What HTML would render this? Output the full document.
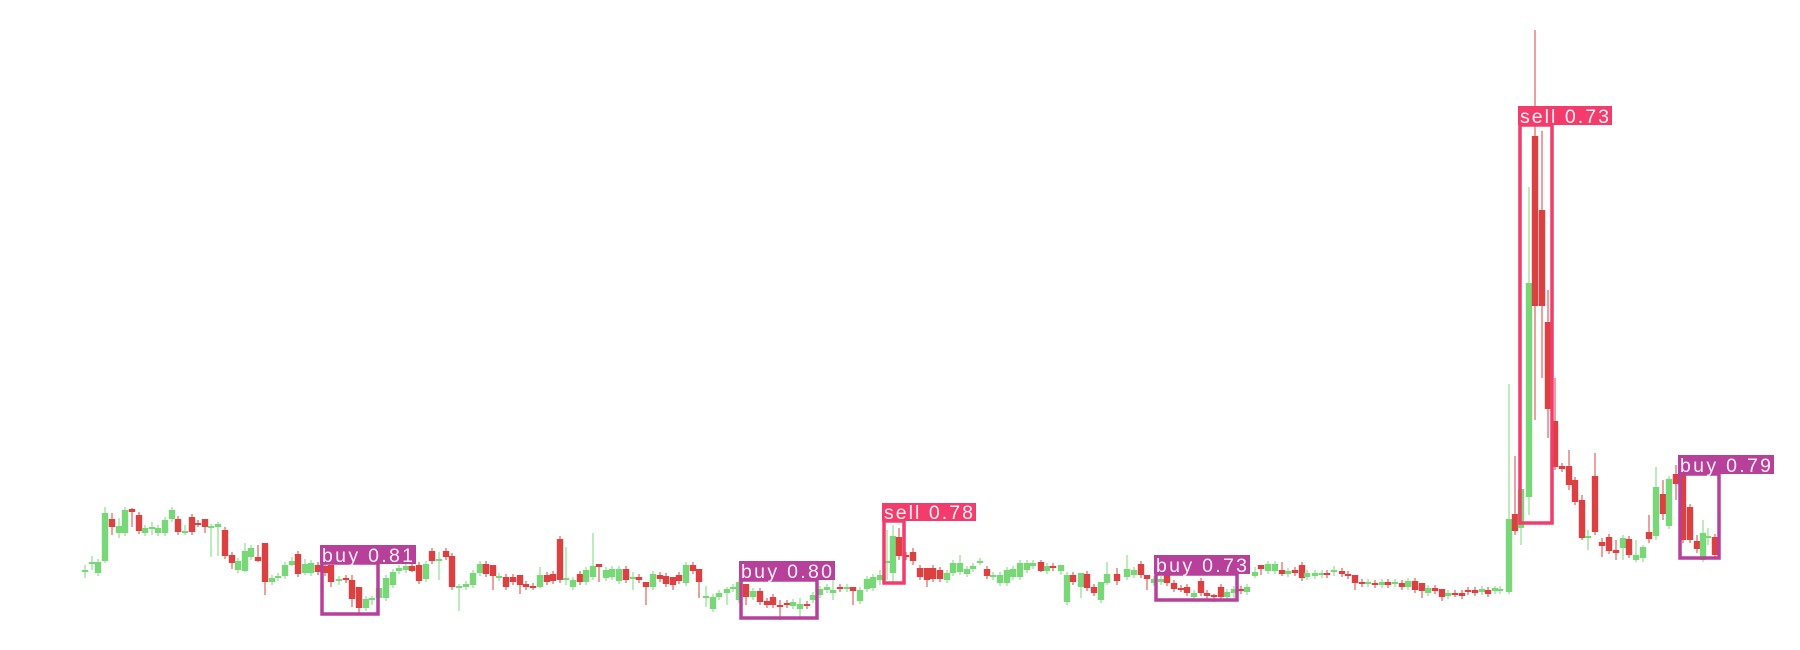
<!DOCTYPE html>
<html><head><meta charset="utf-8">
<style>
html,body{margin:0;padding:0;background:#fff;width:1800px;height:650px;overflow:hidden}
svg{display:block}
.lb{font-family:"Liberation Sans",sans-serif;font-size:19.5px;fill:#fdf0f4}
</style></head>
<body>
<svg id="c" width="1800" height="650" viewBox="0 0 1800 650" xmlns="http://www.w3.org/2000/svg">
<g id="cd"></g>
<g fill="none" stroke-width="3.5">
<rect x="322" y="563" width="56" height="51" stroke="#b7409b"/>
<rect x="741" y="580" width="76" height="38" stroke="#b7409b"/>
<rect x="884" y="521" width="20" height="62" stroke="#f43c6c"/>
<rect x="1156" y="574" width="81" height="26" stroke="#b7409b"/>
<rect x="1520" y="125" width="32" height="398" stroke="#f43c6c"/>
<rect x="1680" y="474" width="39" height="84" stroke="#b7409b"/>
</g>
<rect x="320" y="545" width="96" height="19" fill="#b7409b"/>
<text class="lb" x="322" y="562" textLength="91" lengthAdjust="spacing">buy  0.81</text>
<rect x="739" y="561" width="96" height="19" fill="#b7409b"/>
<text class="lb" x="741" y="578" textLength="91" lengthAdjust="spacing">buy  0.80</text>
<rect x="882" y="503" width="94" height="18" fill="#f43c6c"/>
<text class="lb" x="884" y="519" textLength="89" lengthAdjust="spacing">sell  0.78</text>
<rect x="1154" y="555" width="96" height="19" fill="#b7409b"/>
<text class="lb" x="1156" y="572" textLength="91" lengthAdjust="spacing">buy  0.73</text>
<rect x="1518" y="106" width="94" height="19" fill="#f43c6c"/>
<text class="lb" x="1520" y="123" textLength="89" lengthAdjust="spacing">sell  0.73</text>
<rect x="1678" y="455" width="96" height="19" fill="#b7409b"/>
<text class="lb" x="1680" y="472" textLength="91" lengthAdjust="spacing">buy  0.79</text>
</svg>
<script>
var D=[
[85,570,572,'g',565,578],[92,562,564,'g',556,570],[98,562,573,'g'],[105,513,561,'g',507,563],[112,519,527,'r',513,535],[119,526,533,'g',518,538],[125,510,533,'g'],[132,509,512,'r',508,527],[139,515,531,'r'],[145,528,533,'g'],[152,527,529,'g',522,535],[158,528,533,'g'],[165,520,533,'g'],[172,510,519,'g'],[178,519,532,'r'],[185,531,533,'g',525,535],[192,517,532,'r'],[198,523,524,'r'],[205,519,527,'r',519,533],[211,526,528,'g',524,557],[218,524,527,'g',522,556],[225,530,556,'r'],[232,555,563,'r',552,569],[238,561,570,'g'],[245,551,571,'g',543,572],[251,548,557,'g'],[258,557,561,'r',545,562],[265,543,582,'r',543,595],[272,578,582,'g'],[278,576,578,'g'],[285,565,576,'g'],[292,561,565,'g',557,566],[298,554,574,'r'],[305,564,573,'g',559,575],[311,563,573,'g'],[318,565,572,'r'],[325,566,573,'r'],[331,565,582,'r',565,587],[339,579,581,'g',576,585],[346,578,580,'r'],[352,580,599,'r',575,607],[359,587,608,'r',587,613],[366,599,608,'g'],[372,598,600,'g',596,605],[379,588,598,'g'],[386,578,598,'g'],[393,572,585,'g'],[399,568,571,'g'],[406,566,570,'g'],[412,566,571,'r',560,572],[419,565,581,'r'],[426,564,579,'g'],[432,551,561,'r'],[439,559,561,'g',552,580],[446,551,557,'r'],[452,556,587,'r'],[459,586,587,'g',584,611],[466,584,587,'g'],[473,573,585,'g'],[480,564,573,'g'],[486,564,574,'r'],[493,565,576,'r',565,590],[499,576,578,'g'],[506,577,587,'r'],[513,577,582,'r'],[520,575,585,'r',575,594],[526,584,587,'r'],[533,586,587,'r'],[540,575,587,'g',567,588],[547,575,582,'r'],[553,574,581,'r'],[560,539,580,'r'],[566,578,580,'g',547,585],[573,580,587,'g'],[580,574,582,'r'],[586,570,582,'g'],[593,566,577,'g',533,580],[599,564,567,'r',564,582],[606,570,578,'g'],[612,569,577,'g'],[619,569,581,'g'],[626,569,580,'r'],[633,577,579,'g',572,590],[639,577,580,'r'],[646,582,587,'r',582,605],[653,574,587,'g'],[660,575,579,'r'],[666,576,584,'r'],[673,577,585,'r',577,590],[679,575,581,'r'],[686,565,583,'g'],[693,565,571,'r'],[699,569,582,'r',569,598],[706,596,598,'g',586,607],[713,597,609,'g'],[719,593,597,'g'],[727,589,593,'g',587,605],[733,587,589,'g'],[739,582,600,'g'],[746,584,597,'r',584,605],[753,591,597,'g'],[760,591,602,'r'],[767,601,605,'r'],[773,597,605,'r'],[780,605,607,'r',600,620],[787,603,605,'r'],[793,602,606,'g'],[800,604,609,'g',598,617],[807,604,606,'r'],[813,595,600,'g'],[820,589,595,'g'],[827,587,590,'g'],[833,590,593,'g',580,600],[840,587,589,'r'],[847,587,589,'g'],[853,587,591,'r',587,605],[860,590,601,'g'],[867,579,589,'g'],[873,577,588,'g'],[880,575,580,'g',570,585],[887,561,563,'g',530,580],[893,536,573,'g',525,585],[899,537,556,'r',528,560],[906,555,557,'r'],[913,552,561,'r',548,565],[920,568,577,'r'],[927,568,580,'r',568,587],[933,568,579,'r'],[940,570,579,'r'],[947,573,580,'g'],[953,563,573,'g'],[960,563,572,'g',555,575],[967,569,574,'g'],[973,566,569,'g'],[980,561,563,'g',558,565],[987,569,576,'r'],[993,575,577,'g'],[1000,575,583,'g'],[1007,570,583,'g'],[1013,569,577,'g'],[1020,563,577,'g'],[1027,563,570,'g'],[1033,563,566,'g'],[1041,562,571,'r',560,572],[1047,566,571,'g'],[1053,566,568,'r'],[1061,565,571,'g',565,575],[1067,575,602,'g'],[1073,575,582,'r'],[1081,573,587,'g',573,598],[1087,574,588,'r'],[1094,587,593,'r'],[1101,582,600,'g',582,603],[1107,574,583,'g',562,585],[1117,574,581,'r',568,585],[1127,569,577,'g',555,580],[1134,570,575,'g'],[1141,564,575,'r'],[1147,575,579,'r',575,590],[1154,579,583,'g'],[1161,579,582,'g'],[1167,575,583,'r'],[1174,583,589,'r'],[1181,588,589,'r'],[1187,587,593,'r'],[1194,593,597,'g',590,600],[1201,581,593,'r'],[1207,593,596,'r'],[1214,595,597,'r',594,602],[1221,587,597,'r'],[1227,592,597,'g'],[1234,589,593,'g',586,598],[1241,589,591,'r'],[1247,587,592,'g'],[1255,572,576,'g',567,578],[1261,565,569,'r',565,575],[1268,564,571,'g'],[1275,564,571,'g'],[1282,570,574,'r',562,576],[1288,571,574,'g'],[1295,570,573,'r'],[1302,565,578,'r'],[1307,573,577,'g'],[1315,573,576,'g'],[1322,573,575,'g'],[1327,573,575,'r'],[1334,570,572,'g',566,576],[1342,571,574,'r'],[1348,574,576,'r'],[1355,575,583,'r',575,590],[1362,582,584,'r'],[1368,582,584,'g'],[1375,583,585,'r'],[1382,582,585,'g'],[1388,582,585,'r'],[1395,582,584,'g'],[1402,583,587,'r'],[1408,581,587,'g'],[1415,581,590,'r'],[1422,583,591,'r',583,598],[1428,588,593,'g'],[1435,588,591,'r'],[1442,589,597,'r',589,601],[1448,593,596,'g'],[1455,593,594,'r'],[1462,593,596,'r'],[1468,590,592,'r'],[1475,590,593,'r'],[1482,589,592,'g',586,595],[1488,590,594,'r'],[1495,588,591,'g',586,594],[1500,589,591,'g'],
[1509,519,592,'g',384,594],[1515,514,531,'r',456,535],[1521,489,528,'g',480,545],[1529,283,497,'g',187,515],[1535,136,306,'r',30,420],[1542,210,306,'r',131,378],[1548,322,409,'r',290,438],[1555,421,467,'r',378,470],[1562,466,469,'r'],[1569,466,485,'r',450,490],[1575,480,502,'r'],[1582,500,538,'r',495,540],[1588,536,538,'g',530,550],[1595,476,532,'r',453,535],[1602,542,546,'r',538,557],[1609,537,551,'r'],[1616,550,553,'r',540,560],[1623,538,548,'g',535,560],[1629,539,555,'r'],[1636,555,560,'g',540,562],[1643,547,558,'g',545,562],[1649,532,539,'r',515,543],[1656,487,536,'g',467,540],[1663,494,514,'r',480,520],[1669,479,526,'g'],[1676,474,484,'r',465,500],[1683,474,540,'r'],[1690,507,540,'r'],[1697,541,549,'r',535,553],[1703,533,560,'g',520,562],[1708,536,538,'g',528,545],[1715,537,555,'r']
];
var g=document.getElementById('cd'),s='';
D.forEach(function(d){var x=d[0],t=d[1],b=d[2],c=d[3]=='g'?'#78d878':'#dc4040',wc=d[3]=='g'?'#8fe08f':'#e06060';
var wt=d.length>4?d[4]:t-3,wb=d.length>5?d[5]:b+3;
s+='<line x1="'+x+'" x2="'+x+'" y1="'+wt+'" y2="'+wb+'" stroke="'+wc+'" stroke-width="1.2"/>';
var h=Math.max(b-t,2);s+='<rect x="'+(x-3.2)+'" y="'+t+'" width="6.4" height="'+h+'" fill="'+c+'"/>';});
g.innerHTML=s;
</script>
</body></html>
